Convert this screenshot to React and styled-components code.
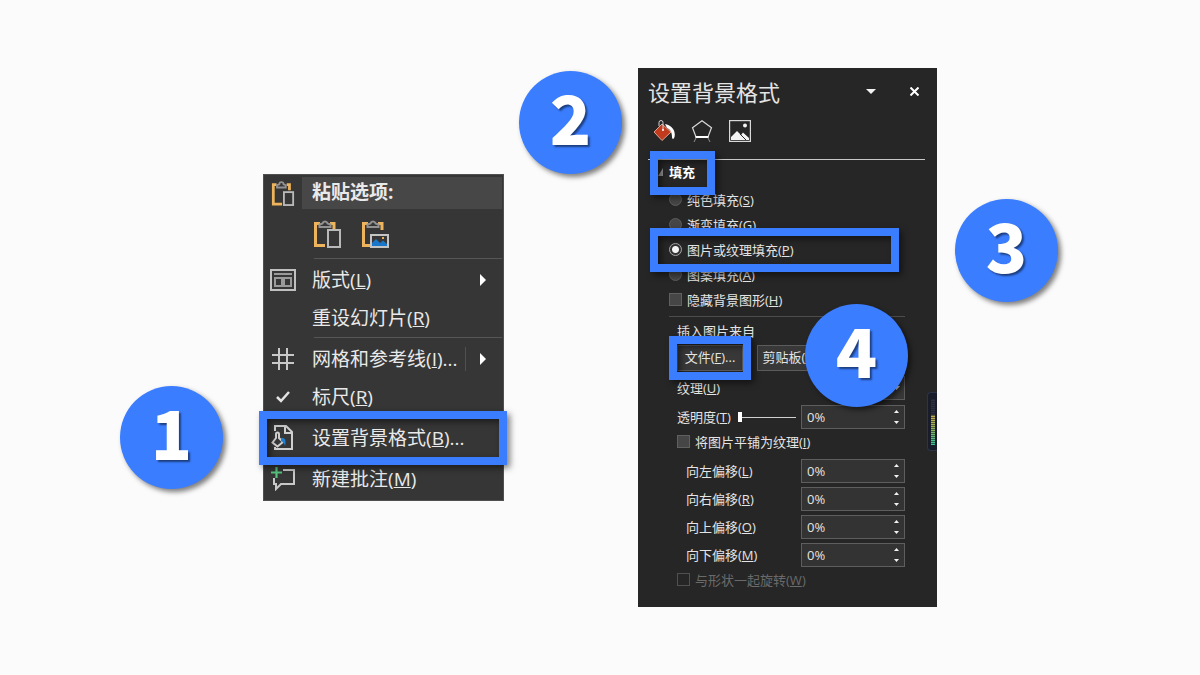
import React, { useState } from "react";
import styled, { createGlobalStyle } from "styled-components";

const ACCENT = "#3a7dff";

const GlobalStyle = createGlobalStyle`
  *, *::before, *::after { box-sizing: border-box; }
  body {
    margin: 0;
    background: #fbfbfb;
    font-family: "Open Sans", "Noto Sans CJK SC", sans-serif;
  }
  button, input { font: inherit; color: inherit; margin: 0; }
  h2, p { margin: 0; font-weight: 400; }
`;

const Stage = styled.main`
  min-height: 100vh;
  display: flex;
  justify-content: center;
  align-items: center;
  gap: 134px;
  overflow: hidden;
`;

/* ---------- annotations ---------- */

const Highlight = styled.span`
  position: absolute;
  inset: ${(p) => p.$inset};
  border: 8px solid ${ACCENT};
  filter: drop-shadow(3px 3px 3px rgba(0, 0, 0, 0.5));
  pointer-events: none;
  z-index: 2;
`;

const StepBadge = styled.span`
  position: absolute;
  left: ${(p) => p.$left};
  top: ${(p) => p.$top};
  width: 103px;
  height: 103px;
  padding-bottom: 14px;
  display: flex;
  align-items: center;
  justify-content: center;
  border-radius: 50%;
  background: ${ACCENT};
  box-shadow: 3px 3px 5px rgba(0, 0, 0, 0.5);
  color: #fff;
  font: 900 68px/1 "Noto Sans CJK SC", sans-serif;
  text-shadow: 2px 2px 2px rgba(0, 0, 0, 0.5);
  pointer-events: none;
  z-index: 3;
`;

/* ---------- context menu ---------- */

const Menu = styled.div`
  flex: 0 1 241px;
  padding: 2px 1px 2px 0;
  border: 1px solid #505050;
  background: #363636;
  color: #e9e9e9;
  font-size: 19px;
  line-height: 28px;
`;

const MenuHeader = styled.div`
  display: flex;
  height: 32px;
`;

const MenuIcon = styled.span`
  flex: none;
  width: 38px;
  display: flex;
  align-items: center;
  justify-content: center;
`;

const MenuTitle = styled.p`
  flex: 1;
  padding-left: 10px;
  background: #474747;
  font-weight: 700;
  line-height: 30px;
`;

const PasteRow = styled.div`
  display: flex;
  align-items: center;
  gap: 20px;
  height: 49px;
  padding-left: 49px;
`;

const PasteButton = styled.button`
  display: flex;
  padding: 0;
  border: 0;
  background: none;
`;

const MenuRule = styled.hr`
  height: 1px;
  margin: 0 0 2px 50px;
  border: 0;
  background: #565656;
`;

const MenuItem = styled.button`
  position: relative;
  display: flex;
  align-items: center;
  width: 100%;
  height: ${(p) => (p.$tall ? 44 : 38)}px;
  padding: 0;
  border: 0;
  background: none;
  text-align: left;
  white-space: nowrap;
`;

const MenuLabel = styled.span`
  flex: 1;
  padding-left: 10px;
`;

const Submenu = styled.span`
  display: flex;
  align-items: center;
  justify-content: center;
  width: 37px;
  height: 24px;
  padding-right: 2px;
  border-left: 1px solid ${(p) => (p.$split ? "#505050" : "transparent")};
`;

/* ---------- format pane ---------- */

const Pane = styled.section`
  position: relative;
  flex: 0 1 299px;
  min-width: 0;
  padding-bottom: 15px;
  background: #262626;
  color: #e4e4e4;
  font-size: 13px;
  line-height: 20px;
`;

const PaneHeader = styled.header`
  display: flex;
  align-items: center;
  gap: 34px;
  height: 52px;
  padding: 0 18px 4px 10px;
`;

const PaneTitle = styled.h2`
  flex: 1;
  font-size: 22px;
  line-height: 32px;
`;

const IconButton = styled.button`
  display: flex;
  padding: 0 0 1px;
  border: 0;
  background: none;
`;

const Tabs = styled.div`
  display: flex;
  gap: 16px;
  margin: 0 12px 0 10px;
  padding: 0 0 17px 5px;
  border-bottom: 1px solid #c8c8c8;
`;

const Tab = styled.button`
  display: flex;
  width: 22px;
  height: 22px;
  padding: 0;
  border: 0;
  background: none;
`;

const PaneBody = styled.div`
  padding: 0 32px 0 31px;
`;

const SectionToggle = styled.button`
  position: relative;
  display: flex;
  align-items: center;
  gap: 6px;
  width: 49px;
  height: 26px;
  margin: 0 0 1px -11px;
  padding: 0 0 2px;
  border: 0;
  background: none;
  color: #fff;
  font-weight: 700;
  white-space: nowrap;
`;

const Choice = styled.label`
  position: relative;
  display: flex;
  align-items: center;
  gap: 5px;
  height: 25px;
  white-space: nowrap;
  color: ${(p) => (p.$off ? "#6a6a6a" : "inherit")};
`;

const Radio = styled.input.attrs({ type: "radio" })`
  appearance: none;
  flex: none;
  width: 13px;
  height: 13px;
  border: 1px solid #5c5c5c;
  border-radius: 50%;
  background: #464646;
  &:checked {
    border-color: #a8a8a8;
    background: radial-gradient(circle, #f4f4f4 0 3px, #333 4px);
  }
`;

const Check = styled.input.attrs({ type: "checkbox" })`
  appearance: none;
  flex: none;
  width: 13px;
  height: 13px;
  border: 1px solid #606060;
  background: #464646;
  &:checked { background: #d8d8d8; }
  &:disabled { border-color: #505050; background: transparent; }
`;

const Rule = styled.hr`
  height: 1px;
  margin: 4px 0 0;
  border: 0;
  background: #4c4c4c;
`;

const SubSection = styled.div`
  padding-left: 8px;
`;

const Caption = styled.p`
  line-height: 28px;
`;

const ButtonRow = styled.div`
  position: relative;
  display: flex;
  gap: 14px;
  height: 26px;
`;

const PushButton = styled.button`
  position: relative;
  width: ${(p) => p.$width};
  padding: 0 0 2px;
  border: 1px solid #5c5c5c;
  background: #383838;
  white-space: nowrap;
`;

const Field = styled.div`
  display: flex;
  align-items: center;
  justify-content: space-between;
  height: 24px;
  margin-top: ${(p) => p.$gap};
  padding-left: ${(p) => (p.$nested ? 9 : 0)}px;
  white-space: nowrap;
`;

const DropButton = styled.button`
  display: flex;
  align-items: center;
  justify-content: flex-end;
  width: 40px;
  height: 24px;
  padding: 0 4px;
  border: 1px solid #5c5c5c;
  background: #383838;
`;

const Slider = styled.input.attrs({ type: "range" })`
  appearance: none;
  flex: 1;
  width: 0;
  min-width: 0;
  height: 12px;
  margin: 0 5px 0 7px;
  background: linear-gradient(#d0d0d0, #d0d0d0) center / 100% 1px no-repeat;
  &::-webkit-slider-thumb {
    appearance: none;
    width: 4px;
    height: 10px;
    background: #fff;
  }
`;

const SpinBox = styled.div`
  flex: none;
  display: flex;
  width: 104px;
  height: 24px;
  border: 1px solid #5e5e5e;
  background: #333;
`;

const SpinInput = styled.input`
  flex: 1;
  min-width: 0;
  padding: 0 0 0 5px;
  border: 0;
  background: none;
`;

const SpinArrows = styled.div`
  display: flex;
  flex-direction: column;
  width: 16px;
`;

const SpinArrow = styled.button`
  flex: 1;
  display: flex;
  align-items: center;
  justify-content: center;
  padding: 0;
  border: 0;
  background: none;
`;

const OffsetGroup = styled.div`
  padding-top: 1px;
`;

const Meter = styled.div`
  position: absolute;
  right: 0;
  top: 324px;
  width: 10px;
  height: 59px;
  padding: 6px 3px 5px;
  border: 1px solid #2c3448;
  border-right: 0;
  border-radius: 4px 0 0 4px;
  background: #191d2a;
`;

const MeterScale = styled.div`
  width: 4px;
  height: 100%;
  background:
    repeating-linear-gradient(rgba(25, 29, 42, 0.6) 0 1px, transparent 1px 2px),
    linear-gradient(#2c3242 0 34%, #c9b24a 35%, #9ab552 60%, #35c49a 100%);
`;

/* ---------- drawings ---------- */

const Clipboard = ({ picture }) => (
  <svg width="28" height="30" viewBox="0 0 28 30" fill="none" aria-hidden="true">
    <path d="M7 4.500H2.500v22H12M17 4.500h4V11" stroke="#eeb45c" strokeWidth="3" />
    <path d="M6.500 8V5.500L9.500 4.500a2.600 2.600 0 0 1 5 0l3 1V8z" fill="#363636" stroke="#929292" strokeWidth="2" />
    {picture ? (
      <>
        <rect x="10" y="16" width="17" height="12" fill="#363636" stroke="#c4c4c4" strokeWidth="2" />
        <path d="M11 27v-3l4-4 4 4 3-2.500 4 3.500v2z" fill="#1a76c8" />
        <rect x="21" y="18" width="2" height="2" fill="#e9ae55" />
      </>
    ) : (
      <rect x="15" y="11" width="12" height="17" fill="#363636" stroke="#b9b9b9" strokeWidth="2" />
    )}
  </svg>
);

const HeaderClipboard = () => (
  <svg width="24" height="27" viewBox="0 0 26 29" fill="none" aria-hidden="true">
    <path d="M6 5H2.500v21H12M17 5h3v6" stroke="#eeb45c" strokeWidth="3" />
    <path d="M6.500 8V5.500L9 4.500a2.300 2.300 0 0 1 4.600 0L16 5.500V8z" fill="#363636" stroke="#929292" strokeWidth="2" />
    <rect x="14" y="13" width="10" height="14" fill="#363636" stroke="#b9b9b9" strokeWidth="2" />
  </svg>
);

const LayoutIcon = () => (
  <svg width="26" height="22" viewBox="0 0 26 22" fill="none" aria-hidden="true">
    <rect x="1" y="1" width="24" height="20" stroke="#c0c0c0" strokeWidth="2" />
    <path d="M4 5h18" stroke="#9a9a9a" strokeWidth="2" />
    <path d="M5 9h7v8H5zM14 9h7v8h-7z" stroke="#9a9a9a" strokeWidth="2" />
  </svg>
);

const GridIcon = () => (
  <svg width="24" height="24" viewBox="0 0 24 24" fill="none" stroke="#c8c8c8" strokeWidth="2" aria-hidden="true">
    <path d="M8 1v22M16 1v22M1 8h22M1 16h22" />
  </svg>
);

const CheckIcon = () => (
  <svg width="16" height="14" viewBox="0 0 16 14" fill="none" aria-hidden="true">
    <path d="M2 7l4 4 8-9" stroke="#e4e4e4" strokeWidth="2.500" />
  </svg>
);

const BackgroundIcon = () => (
  <svg width="24" height="28" viewBox="0 0 24 28" fill="none" aria-hidden="true">
    <path d="M4 7V2h11l6 6v17H4v-2" stroke="#cfcfcf" strokeWidth="2" />
    <path d="M14 2v7h7" stroke="#cfcfcf" strokeWidth="2" />
    <path d="M1.500 18.500L5 14V10a1.500 1.500 0 0 1 3 0v4l4 4-5.500 4.500z" fill="#363636" stroke="#cfcfcf" strokeWidth="2" />
    <path d="M10 14c4-.500 5.500 2 4 8-1-3-2-4-4-5z" fill="#1e7fd0" />
  </svg>
);

const CommentIcon = () => (
  <svg width="26" height="24" viewBox="0 0 26 24" fill="none" aria-hidden="true">
    <path d="M13 3h11v14H11l-5 5v-5H4v-6" stroke="#c8c8c8" strokeWidth="2" />
    <path d="M6.500 0v11M1 5.500h11" stroke="#55c47e" strokeWidth="2.200" />
  </svg>
);

const RightArrow = () => (
  <svg width="6" height="12" viewBox="0 0 6 12" aria-hidden="true">
    <path d="M0 0l6 6-6 6z" fill="#fff" />
  </svg>
);

const Caret = ({ up, size = 5 }) => (
  <svg width={size} height={Math.ceil(size / 2)} viewBox="0 0 10 5" preserveAspectRatio="none" aria-hidden="true">
    <path d={up ? "M0 5l5-5 5 5z" : "M0 0l5 5 5-5z"} fill="#f2f2f2" />
  </svg>
);

const CloseIcon = () => (
  <svg width="9" height="9" viewBox="0 0 9 9" aria-hidden="true">
    <path d="M.500.500l8 8M8.500.500l-8 8" stroke="#fff" strokeWidth="2" />
  </svg>
);

const FillIcon = () => (
  <svg width="22" height="22" viewBox="0 0 22 22" fill="none" aria-hidden="true">
    <path d="M12 4c6 1 11 6 9.500 13-1 3-2.500 2-2.500 0 0-5-2-8-5-9z" fill="#fff" />
    <path d="M1 12L9 4l9 8-9 8.500z" fill="#c23b1d" stroke="#e1a391" />
    <path d="M6 6V2.500a2 2 0 0 1 4 0V10" stroke="#d4d4d4" />
    <circle cx="10" cy="10" r="1" fill="#fff" />
  </svg>
);

const EffectIcon = () => (
  <svg width="22" height="22" viewBox="0 0 22 22" fill="none" aria-hidden="true">
    <path d="M11 .800l9.500 7L17 17H5L1.500 7.800z" stroke="#d8d8d8" strokeWidth="1.200" />
    <path d="M4.500 17h13" stroke="#fff" strokeWidth="2" />
    <path d="M5 18l-2 4M17 18l2 4" stroke="#8e8e8e" />
  </svg>
);

const PictureIcon = () => (
  <svg width="22" height="22" viewBox="0 0 22 22" fill="none" aria-hidden="true">
    <rect x=".600" y=".600" width="20.800" height="20.800" stroke="#d8d8d8" strokeWidth="1.200" />
    <path d="M2 20v-3l6-6 4 4 2-2.500 6 5.500v2z" fill="#f2f2f2" />
    <path d="M11 14l6 6" stroke="#262626" />
    <circle cx="16" cy="5.500" r="2" fill="#f2f2f2" />
  </svg>
);

const OpenTriangle = () => (
  <svg width="5" height="8" viewBox="0 0 5 8" aria-hidden="true">
    <path d="M0 8l5-8v8z" fill="#8f8f8f" />
  </svg>
);

/* ---------- pieces ---------- */

const Key = ({ text, k, tail = "" }) => (
  <>
    {text}(<u>{k}</u>){tail}
  </>
);

function Spin({ id }) {
  return (
    <SpinBox>
      <SpinInput id={id} defaultValue="0%" />
      <SpinArrows>
        <SpinArrow aria-label="增加"><Caret up size={5} /></SpinArrow>
        <SpinArrow aria-label="减少"><Caret size={5} /></SpinArrow>
      </SpinArrows>
    </SpinBox>
  );
}

const FILLS = [
  ["solid", "纯色填充", "S"],
  ["gradient", "渐变填充", "G"],
  ["picture", "图片或纹理填充", "P"],
  ["pattern", "图案填充", "A"],
];

const OFFSETS = [
  ["left", "向左偏移", "L"],
  ["right", "向右偏移", "R"],
  ["up", "向上偏移", "O"],
  ["down", "向下偏移", "M"],
];

function ContextMenu() {
  return (
    <Menu>
      <MenuHeader>
        <MenuIcon><HeaderClipboard /></MenuIcon>
        <MenuTitle>粘贴选项:</MenuTitle>
      </MenuHeader>
      <PasteRow>
        <PasteButton aria-label="粘贴"><Clipboard /></PasteButton>
        <PasteButton aria-label="粘贴为图片"><Clipboard picture /></PasteButton>
      </PasteRow>
      <MenuRule />
      <MenuItem>
        <MenuIcon><LayoutIcon /></MenuIcon>
        <MenuLabel><Key text="版式" k="L" /></MenuLabel>
        <Submenu><RightArrow /></Submenu>
      </MenuItem>
      <MenuItem>
        <MenuIcon />
        <MenuLabel><Key text="重设幻灯片" k="R" /></MenuLabel>
      </MenuItem>
      <MenuRule />
      <MenuItem>
        <MenuIcon><GridIcon /></MenuIcon>
        <MenuLabel><Key text="网格和参考线" k="I" tail="..." /></MenuLabel>
        <Submenu $split><RightArrow /></Submenu>
      </MenuItem>
      <MenuItem>
        <MenuIcon><CheckIcon /></MenuIcon>
        <MenuLabel><Key text="标尺" k="R" /></MenuLabel>
      </MenuItem>
      <MenuItem $tall>
        <MenuIcon><BackgroundIcon /></MenuIcon>
        <MenuLabel><Key text="设置背景格式" k="B" tail="..." /></MenuLabel>
        <Highlight $inset="-5px" />
        <StepBadge $left="-144px" $top="-30px">1</StepBadge>
      </MenuItem>
      <MenuItem>
        <MenuIcon><CommentIcon /></MenuIcon>
        <MenuLabel><Key text="新建批注" k="M" /></MenuLabel>
      </MenuItem>
    </Menu>
  );
}

function FormatPane() {
  const [fill, setFill] = useState("picture");
  return (
    <Pane>
      <StepBadge $left="-119px" $top="3px">2</StepBadge>
      <PaneHeader>
        <PaneTitle>设置背景格式</PaneTitle>
        <IconButton aria-label="任务窗格选项"><Caret size={10} /></IconButton>
        <IconButton aria-label="关闭"><CloseIcon /></IconButton>
      </PaneHeader>
      <Tabs>
        <Tab aria-label="填充"><FillIcon /></Tab>
        <Tab aria-label="效果"><EffectIcon /></Tab>
        <Tab aria-label="图片"><PictureIcon /></Tab>
      </Tabs>
      <PaneBody>
        <SectionToggle aria-expanded="true">
          <OpenTriangle />
          填充
          <Highlight $inset="-9px -8px" />
        </SectionToggle>
        {FILLS.map(([id, text, k]) => (
          <Choice key={id}>
            <Radio name="fill" checked={fill === id} onChange={() => setFill(id)} />
            <span><Key text={text} k={k} /></span>
            {id === "picture" && (
              <>
                <Highlight $inset="-9px 6px -10px -19px" />
                <StepBadge $left="286px" $top="-38px">3</StepBadge>
              </>
            )}
          </Choice>
        ))}
        <Choice>
          <Check />
          <span><Key text="隐藏背景图形" k="H" /></span>
        </Choice>
        <Rule />
        <SubSection>
          <Caption>插入图片来自</Caption>
          <ButtonRow>
            <PushButton $width="66px">
              <Key text="文件" k="F" tail="..." />
              <Highlight $inset="-10px -9px" />
            </PushButton>
            <PushButton $width="66px"><Key text="剪贴板" k="C" /></PushButton>
            <StepBadge $left="128px" $top="-41px">4</StepBadge>
          </ButtonRow>
          <Field $gap="5px">
            <label htmlFor="texture"><Key text="纹理" k="U" /></label>
            <DropButton id="texture"><Caret size={7} /></DropButton>
          </Field>
          <Field $gap="5px">
            <label htmlFor="opacity"><Key text="透明度" k="T" /></label>
            <Slider aria-label="透明度" defaultValue={0} />
            <Spin id="opacity" />
          </Field>
          <Choice>
            <Check />
            <span><Key text="将图片平铺为纹理" k="I" /></span>
          </Choice>
          <OffsetGroup>
            {OFFSETS.map(([id, text, k]) => (
              <Field key={id} $nested $gap="4px">
                <label htmlFor={id}><Key text={text} k={k} /></label>
                <Spin id={id} />
              </Field>
            ))}
          </OffsetGroup>
          <Choice $off>
            <Check disabled />
            <span><Key text="与形状一起旋转" k="W" /></span>
          </Choice>
        </SubSection>
      </PaneBody>
      <Meter><MeterScale /></Meter>
    </Pane>
  );
}

export default function App() {
  return (
    <>
      <GlobalStyle />
      <Stage>
        <ContextMenu />
        <FormatPane />
      </Stage>
    </>
  );
}
